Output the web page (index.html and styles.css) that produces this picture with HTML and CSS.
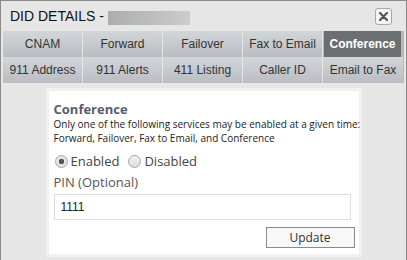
FILE: index.html
```html
<!DOCTYPE html>
<html lang="en">
<head>
    <meta charset="UTF-8">
    <meta name="viewport" content="width=device-width, initial-scale=1.0">
    <title>DID Details</title>
    <link rel="stylesheet" href="styles.css">
</head>
<body>
    <div class="dialog">
        <div class="titlebar">
            <span class="title">DID DETAILS -</span>
            <span class="blurred"></span>
            <button class="close-button">
                <svg width="9" height="9" viewBox="0 0 9 9"><path d="M1 1L8 8M8 1L1 8" stroke="#555" stroke-width="2.2" stroke-linecap="round"/></svg>
            </button>
        </div>
        <div class="tabs">
            <div class="tab">CNAM</div>
            <div class="tab">Forward</div>
            <div class="tab">Failover</div>
            <div class="tab">Fax to Email</div>
            <div class="tab active">Conference</div>
            <div class="tab">911 Address</div>
            <div class="tab">911 Alerts</div>
            <div class="tab">411 Listing</div>
            <div class="tab">Caller ID</div>
            <div class="tab">Email to Fax</div>
        </div>
        <div class="panel">
            <h3>Conference</h3>
            <p class="note">Only one of the following services may be enabled at a given time:<br>Forward, Failover, Fax to Email, and Conference</p>
            <div class="radios">
                <label><input type="radio" name="conf" checked> Enabled</label>
                <label><input type="radio" name="conf"> Disabled</label>
            </div>
            <label class="field-label" for="pin">PIN (Optional)</label>
            <input type="text" id="pin" class="pin" value="1111">
            <div class="actions">
                <button class="update-button">Update</button>
            </div>
        </div>
    </div>
</body>
</html>
```

FILE: styles.css
```css
html, body {
    margin: 0;
    height: 100%;
}
body {
    font-family: "Liberation Sans", Arial, sans-serif;
    background-color: #e6e6e6;
}
.dialog {
    box-sizing: border-box;
    height: 100%;
    border: 1px solid #8a8a8a;
    border-bottom: none;
    background-color: #e6e6e6;
}
.titlebar {
    display: flex;
    align-items: center;
    height: 30px;
    padding: 0 14px 0 9px;
}
.title {
    font-size: 14px;
    color: #111;
}
.blurred {
    width: 82px;
    height: 14px;
    margin-left: 4px;
    margin-top: 3px;
    background: linear-gradient(to right, #adadad, #c9cdcb);
}
.close-button {
    margin-left: auto;
    display: flex;
    align-items: center;
    justify-content: center;
    width: 17px;
    height: 17px;
    padding: 0;
    border: 1px solid #a8a8a8;
    border-radius: 3px;
    background-color: #f5f5f5;
    cursor: pointer;
}
.tabs {
    display: grid;
    grid-template-columns: repeat(5, 80px);
    margin: 0 2px;
    background-color: #b7bbbf;
}
.tab {
    height: 26px;
    line-height: 26px;
    text-align: center;
    font-size: 12px;
    color: #333;
    background: linear-gradient(to bottom, #d3d6d9, #b9bdc1);
    border-right: 1px solid #e2e4e6;
    box-sizing: border-box;
}
.tab:nth-child(5n) {
    border-right: none;
}
.tab.active {
    background: #6c6f72;
    color: #fff;
    font-weight: bold;
    margin: 0 2px 0 1px;
}
.panel {
    width: 299px;
    margin: 5px auto 0;
    padding: 10px 6px 6px 5px;
    background-color: #fff;
    border: 3px solid #f1f1f1;
    font-family: "Open Sans", "Noto Sans", sans-serif;
    color: #333;
}
h3 {
    margin: 0;
    font-size: 13px;
    line-height: 16px;
    color: #585d6a;
}
.note {
    margin: 0;
    font-size: 10px;
    line-height: 14px;
    white-space: nowrap;
    color: #222;
}
.radios {
    display: flex;
    gap: 8px;
    margin-top: 5px;
    font-size: 13px;
    line-height: 22px;
    color: #444;
}
.radios label {
    display: flex;
    align-items: center;
    gap: 3px;
}
.radios input {
    appearance: none;
    box-sizing: border-box;
    margin: 0 0 0 1px;
    width: 13px;
    height: 13px;
    border: 1px solid #a5a5a5;
    border-radius: 50%;
    background: linear-gradient(to bottom, #f2f2f2, #dcdcdc);
}
.radios input:checked {
    background: radial-gradient(circle, #555 0, #555 2.5px, #e4e4e4 3px);
}
.field-label {
    display: block;
    margin-top: 1px;
    font-size: 13px;
    line-height: 18px;
    color: #555;
}
.pin {
    box-sizing: border-box;
    display: block;
    width: 297px;
    height: 26px;
    margin-top: 3px;
    padding: 0 6px;
    border: 1px solid #dedede;
    font-family: "Liberation Sans", Arial, sans-serif;
    font-size: 12px;
    color: #222;
}
.actions {
    display: flex;
    justify-content: flex-end;
    margin-top: 7px;
    margin-right: -2px;
}
.update-button {
    width: 89px;
    height: 21px;
    padding: 0;
    border: 1px solid #8a8a8a;
    background-color: #f8f8f8;
    font-family: "Open Sans", "Noto Sans", sans-serif;
    font-size: 12px;
    color: #333;
    cursor: pointer;
}
```
